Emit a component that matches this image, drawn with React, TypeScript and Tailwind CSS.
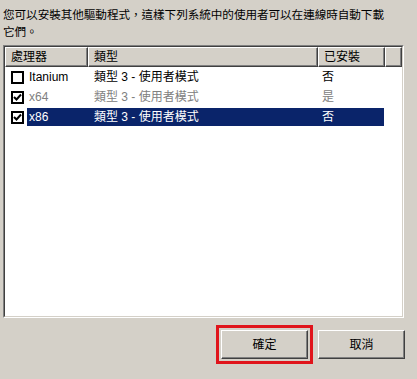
import React from 'react';

const font = { fontFamily: '"Liberation Sans", "Noto Sans CJK TC", sans-serif' };

type Row = { cpu: string; type: string; installed: string; checked: boolean; disabled?: boolean; selected?: boolean };

const rows: Row[] = [
  { cpu: 'Itanium', type: '類型 3 - 使用者模式', installed: '否', checked: false },
  { cpu: 'x64', type: '類型 3 - 使用者模式', installed: '是', checked: true, disabled: true },
  { cpu: 'x86', type: '類型 3 - 使用者模式', installed: '否', checked: true, selected: true },
];

const Check: React.FC<{ on: boolean }> = ({ on }) => (
  <div className="w-[13px] h-[13px] border-2 border-black bg-white flex items-center justify-center shrink-0">
    {on && (
      <svg width="9" height="9" viewBox="0 0 9 9">
        <path d="M1 4 L3.5 6.5 L8 1.5" stroke="#000" strokeWidth="2" fill="none" />
      </svg>
    )}
  </div>
);

const HeaderCell: React.FC<{ w: string; children?: React.ReactNode }> = ({ w, children }) => (
  <div className={`${w} h-full flex items-center pl-[5px] border-t border-l border-t-white border-l-white border-r border-b border-r-[#404040] border-b-[#404040] shadow-[inset_-1px_-1px_0_#808080] text-[12px] text-black`}>
    {children}
  </div>
);

const Btn: React.FC<{ label: string }> = ({ label }) => (
  <button className="w-[87px] h-[29px] bg-[#d4d0c8] border border-t-white border-l-white border-r-[#404040] border-b-[#404040] shadow-[inset_-1px_-1px_0_#808080] text-[12px] text-black flex items-center justify-center">
    {label}
  </button>
);

export default function App() {
  return (
    <div className="w-[417px] h-[379px] bg-[#d4d0c8] flex flex-col" style={font}>
      <p className="pl-[3px] pt-[6px] text-[11.6px] leading-[17px] text-black tracking-[-0.05px]">
        您可以安裝其他驅動程式，這樣下列系統中的使用者可以在連線時自動下載
        <br />
        它們。
      </p>

      <div className="ml-[3px] mt-[5px] w-[401px] h-[273px] border border-t-[#808080] border-l-[#808080] border-r-white border-b-white">
        <div className="w-full h-full border border-t-[#404040] border-l-[#404040] border-r-[#d4d0c8] border-b-[#d4d0c8] bg-white flex flex-col">
          <div className="h-[20px] flex bg-[#d4d0c8]">
            <HeaderCell w="w-[83px]">處理器</HeaderCell>
            <HeaderCell w="w-[230px]">類型</HeaderCell>
            <HeaderCell w="w-[67px]">已安裝</HeaderCell>
            <HeaderCell w="flex-1" />
          </div>
          {rows.map((r) => (
            <div key={r.cpu} className="h-[20px] flex items-center text-[12px]">
              <div className="w-[22px] flex justify-end pr-[3px]">
                <Check on={r.checked} />
              </div>
              <div
                className={`w-[357px] h-[18px] flex items-center ${
                  r.selected ? 'bg-[#0a246a] text-white' : r.disabled ? 'text-[#808080]' : 'text-black'
                }`}
              >
                <span className="w-[60px] pl-[2px]">{r.cpu}</span>
                <span className="w-[230px] pl-[7px]">{r.type}</span>
                <span className="pl-[5px]">{r.installed}</span>
              </div>
            </div>
          ))}
        </div>
      </div>

      <div className="flex justify-end items-center pr-[12px] mt-[7px] gap-[4px]">
        <div className="border-[3px] border-[#e0141b] p-[2px] -mr-[1px]">
          <Btn label="確定" />
        </div>
        <div className="ml-[2px]">
          <Btn label="取消" />
        </div>
      </div>
    </div>
  );
}
